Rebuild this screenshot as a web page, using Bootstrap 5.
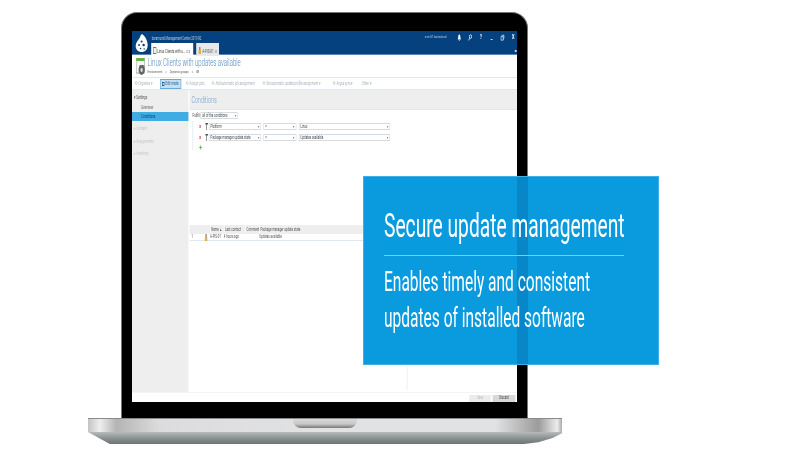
<!DOCTYPE html>
<html lang="en">
<head>
    <meta charset="UTF-8">
    <meta name="viewport" content="width=device-width, initial-scale=1">
    <title>Secure update management</title>
    <link rel="stylesheet" href="https://cdn.jsdelivr.net/npm/bootstrap@5.3.2/dist/css/bootstrap.min.css">
    <style>
        html, body { margin: 0; background: #fff; overflow: hidden; }
        .stage { position: relative; width: 800px; height: 470px; padding: 12px 0 0 88px; font-family: Roboto, sans-serif; }

        /* laptop */
        .bezel { width: 407px; height: 406px; margin-left: 33px; padding: 18px 10px 16px 10px; background: #000; border: 1px solid #777; border-bottom: 0; border-radius: 16px 16px 0 0; }
        .base-top { position: relative; width: 474px; height: 14px; background: linear-gradient(90deg, #c4c4c4 0, #eee 2.5%, #b4b4b4 6%, #dcdcde 15%, #e1e2e4 50%, #e1e2e4 86%, #9b9b9b 95%, #ececec 99%, #aaa 100%); border-top: 1px solid #8a8a8a; }
        .base-notch { position: absolute; left: 205px; top: 0; width: 64px; height: 9px; border-radius: 0 0 8px 8px; background: linear-gradient(180deg, #d8d8d8 0, #c8c8c8 55%, #777 100%); }
        .base-low { width: 474px; height: 12px; background: linear-gradient(180deg, #b6bbbb 0, #8b9291 50%, #6d7574 100%); clip-path: polygon(0 0, 100% 0, 100% 10%, 98% 50%, 95% 85%, 92% 100%, 4.6% 100%); }

        /* the app is laid out wide and squeezed, the whole screenshot is narrowed */
        .screen { width: 385px; height: 371px; overflow: hidden; background: #fff; }
        .app { width: 642px; height: 371px; transform: scaleX(.6); transform-origin: 0 0; filter: blur(.5px); font-size: 5px; line-height: 1; color: #444; white-space: nowrap; }

        .app-head { height: 24px; background: #05417f; color: #cfdcea; border-bottom: 1px solid #5a86b5; position: relative; }
        .app-logo { width: 22px; height: 20px; margin: 2px 5px 0 5px; }
        .head-title { padding: 6px 0 0 1px; height: 11px; font-size: 4.6px; color: #b9cbe0; }
        .tab-one { width: 70px; height: 13px; background: #fff; color: #444; padding: 4px 0 0 3px; margin-right: 5px; }
        .tab-two { width: 38px; height: 13px; background: #e6e8ea; color: #555; padding: 4px 0 0 3px; }
        .tab-ico { width: 6px; height: 7px; margin-right: 1px; vertical-align: -1.5px; }
        .head-right { margin-left: auto; height: 12px; padding: 3px 3px 0 0; gap: 11px; color: #fff; }
        .head-user { font-size: 4px; color: #b9cbe0; width: 43px; padding-top: 1px; }
        .head-ico { width: 7px; text-align: center; font-size: 6.5px; font-weight: 700; }
        .head-ico svg { width: 7px; height: 7px; display: block; }
        .head-more { position: absolute; right: 1px; bottom: 2px; width: 3px; height: 2px; background: #cfdcea; }

        .title-box { height: 23px; border-bottom: 1px solid #dfe8f0; }
        .title-ico { width: 18px; margin: 3px 2px 0 6px; height: 18px; }
        .title-main { font-size: 10px; font-weight: 300; color: #4e86b8; padding-top: 3px; height: 15px; }
        .crumbs { font-size: 4.4px; color: #555; }
        .crumbs span { margin-right: 5px; }

        .tools { height: 12px; border-bottom: 1px solid #dfe8f0; padding: 1px 0 0 5px; color: #a9b3ba; font-size: 4.8px; align-items: center; }
        .tool-item { flex: none; }
        .tool-on { background: #c3dff2; border: 1px solid #6aa7d3; color: #2b5f8a; height: 10px; line-height: 8px; padding-left: 2px; }
        .tool-dot { display: inline-block; width: 4px; height: 4px; border: 1px solid #c4ccd2; border-radius: 50%; margin-right: 2px; vertical-align: -.5px; }
        .tool-on .tool-dot { border-color: #2b5f8a; border-radius: 0; }

        .app-body { height: 302px; }
        .side { width: 94px; background: #eeeeee; flex: none; padding-top: 5px; }
        .side-head { height: 6px; padding-left: 3px; font-size: 5px; color: #555; margin-bottom: 2px; }
        .side-sub { height: 8px; padding: 2px 0 0 15px; color: #666; margin-bottom: 1px; }
        .side-on { background: #3fade3; color: #0d4468; margin-bottom: 5px; height: 9px; }
        .side-off { color: #c1c7cc; padding-left: 3px; height: 6px; margin-bottom: 6.500px; }
        .main-col { width: 548px; padding-left: 2px; }
        .cond-band { height: 20px; background: #eeeeee; color: #6f9ec4; font-size: 9px; font-weight: 300; padding: 6px 0 0 3px; border-bottom: 1px solid #dfe8f0; }
        .cond-area { height: 112px; padding: 2px 0 0 5px; }
        .fulfill-label { width: 13px; flex: none; }
        .fake-sel { height: 7px; background: #fff; border: 1px solid #d5dce1; padding: 0 2px; font-size: 4.8px; line-height: 5px; color: #444; flex: none; justify-content: space-between; }
        .fake-sel i { font-style: normal; font-size: 4px; color: #666; }
        .rules { border-left: 1px solid #d8dfe5; margin: 2px 0 0 0; padding: 1px 0 0 10px; height: 29px; }
        .rule-row { height: 8px; margin-bottom: 3px; align-items: center; }
        .rule-x { width: 7px; color: #d6313a; font-size: 6px; font-weight: 700; flex: none; }
        .rule-pin { width: 5px; height: 7px; margin: 0 1px 0 3px; flex: none; }
        .add-mark { color: #46ad3c; font-size: 8px; font-weight: 700; line-height: 8px; }

        .grid-area { margin-top: 3px; height: 165px; position: relative; }
        .grid-head { height: 9px; background: #eeeeee; align-items: center; color: #555; font-size: 4.8px; }
        .grid-row { height: 7px; align-items: center; border-bottom: 1px solid #dde8f2; color: #555; font-size: 4.8px; }
        .c-num { width: 24px; padding-left: 3px; flex: none; }
        .c-name { width: 23px; flex: none; }
        .c-last { width: 36px; flex: none; }
        .c-com { width: 23px; flex: none; }
        .c-ico { width: 10px; flex: none; }
        .head-cell { border-left: 1px solid #fff; height: 9px; line-height: 9px; padding-left: 1px; }
        .split-line { position: absolute; left: 362px; top: 16px; bottom: 0; width: 1px; background: #dde8f2; }

        .app-foot { height: 10px; justify-content: flex-end; padding: 2px 3px 0 0; gap: 3px; border-top: 1px solid #f2f5f7; }
        .foot-btn { width: 36px; height: 6.5px; text-align: center; font-size: 4.6px; line-height: 6.5px; background: #ececec; color: #bbb; }
        .foot-dark { background: #d8d8d8; color: #444; width: 38px; }

        /* blue callout lies over the laptop */
        .callout { position: absolute; left: 363px; top: 176px; width: 296px; height: 189px; background: #0a9ade; border: 1px solid #3fb0e6; color: #fff; overflow: hidden; }
        .callout-strip { position: absolute; left: 153px; top: 0; bottom: 0; width: 11px; background: #0787c8; }
        .callout-text { position: relative; padding: 29px 0 0 20px; }
        .squeeze { display: block; white-space: nowrap; transform-origin: 0 50%; font-weight: 400; }
        .call-title { font-size: 33px; line-height: 40px; transform: scaleX(.582); }
        .call-rule { width: 240px; height: 1px; background: #7ccbef; margin: 9px 0 8px; }
        .call-sub { font-size: 27px; line-height: 36px; transform: scaleX(.575); }
    </style>
</head>
<body>
    <div class="stage">
        <!-- Laptop -->
        <div class="bezel">
            <div class="screen">
                <div class="app">
                    <!-- Window header -->
                    <div class="app-head d-flex">
                        <svg class="app-logo" viewBox="0 0 13 20" preserveAspectRatio="none">
                            <path d="M7 1 C10 3 12.500 8 12.500 12 C12.500 16.500 10 19 6.500 19 C3 19 .5 16.500 .7 12.500 C.9 9 3.500 7 4.500 5 C5.200 3.600 5.500 2 7 1 Z" fill="#fff"/>
                            <circle cx="6.500" cy="8.500" r="1" fill="#05417f"/><circle cx="4" cy="12" r=".9" fill="#05417f"/><circle cx="8.500" cy="12" r="1.200" fill="#05417f"/><circle cx="5.500" cy="15.500" r=".8" fill="#05417f"/><circle cx="9" cy="16" r=".7" fill="#05417f"/>
                        </svg>
                        <div class="flex-grow-1 d-flex flex-column">
                            <div class="d-flex">
                                <div class="head-title">baramundi Management Center 2019 R2</div>
                                <div class="head-right d-flex">
                                    <div class="head-user">a-win\IT.baritoolocal</div>
                                    <div class="head-ico"><svg viewBox="0 0 8 8"><path d="M4 .5 C2.400 .5 2 2 2 3.500 C2 5 1 5.600 1 6.200 H7 C7 5.600 6 5 6 3.500 C6 2 5.600 .5 4 .5 Z M3.200 6.800 H4.800 V7.800 H3.200 Z" fill="#fff"/></svg></div>
                                    <div class="head-ico"><svg viewBox="0 0 8 8"><circle cx="4.800" cy="3" r="2.100" fill="none" stroke="#fff" stroke-width="1.100"/><path d="M3.300 4.600 L1.200 7.200" stroke="#fff" stroke-width="1.200"/></svg></div>
                                    <div class="head-ico">?</div>
                                    <div class="head-ico">_</div>
                                    <div class="head-ico"><svg viewBox="0 0 8 8"><path d="M2.500 1.500 H7 V5 M1 3 H5.500 V7 H1 Z" fill="none" stroke="#fff" stroke-width="1"/></svg></div>
                                    <div class="head-ico">X</div>
                                </div>
                            </div>
                            <div class="d-flex">
                                <div class="tab-one"><svg class="tab-ico" viewBox="0 0 6 7"><rect x=".5" y=".5" width="5" height="6" fill="#eef2ee" stroke="#6b8a5a"/></svg>Linux Clients with u... <span class="text-danger">x</span> <span class="text-primary">x</span></div>
                                <div class="tab-two"><svg class="tab-ico" viewBox="0 0 6 7"><rect x="1" y="3" width="4" height="4" fill="#e0b040"/><rect x="2" y="0" width="2" height="3" fill="#777"/></svg>A-PIS-01 &nbsp;x</div>
                            </div>
                        </div>
                        <div class="head-more"></div>
                    </div>

                    <!-- Page title -->
                    <div class="title-box d-flex">
                        <svg class="title-ico" viewBox="0 0 18 18">
                            <rect x="1" y="0" width="14" height="15" fill="#f4f6f4" stroke="#9aa"/>
                            <rect x="1" y="0" width="14" height="3" fill="#6cb24a"/>
                            <rect x="6" y="7" width="9" height="8" rx="2" fill="#777"/>
                            <circle cx="10" cy="12" r="5" fill="#666"/><circle cx="10" cy="12" r="2" fill="#ddd"/>
                        </svg>
                        <div>
                            <div class="title-main">Linux Clients with updates available</div>
                            <div class="crumbs"><span>Environment</span><span>&gt;</span><span>Dynamic groups</span><span>&gt;</span><span>IM</span></div>
                        </div>
                    </div>

                    <!-- Toolbar -->
                    <div class="tools d-flex">
                        <div class="tool-item" style="width:42px"><span class="tool-dot"></span>Organize ▾</div>
                        <div class="tool-item tool-on" style="width:35px;margin-right:8px"><span class="tool-dot"></span>Edit mode</div>
                        <div class="tool-item" style="width:43px"><span class="tool-dot"></span>Assign jobs</div>
                        <div class="tool-item" style="width:85px"><span class="tool-dot"></span>Add automatic job assignment</div>
                        <div class="tool-item" style="width:117px"><span class="tool-dot"></span>Set automatic update profile assignment ▾</div>
                        <div class="tool-item" style="width:48px"><span class="tool-dot"></span>Argus sync ▾</div>
                        <div class="tool-item">Other ▾</div>
                    </div>

                    <div class="app-body d-flex">
                        <!-- Sidebar -->
                        <div class="side">
                            <div class="side-head">▾ Settings</div>
                            <div class="side-sub">Overview</div>
                            <div class="side-sub side-on">Conditions</div>
                            <div class="side-off">▸ Content</div>
                            <div class="side-off">▸ Assignments</div>
                            <div class="side-off">▸ Inventory</div>
                        </div>

                        <div class="main-col">
                            <div class="cond-band">Conditions</div>
                            <!-- Conditions -->
                            <div class="cond-area">
                                <div class="d-flex align-items-center">
                                    <span class="fulfill-label">Fulfills</span>
                                    <div class="fake-sel d-flex" style="width:62px">all of the conditions <i>▾</i></div>
                                </div>
                                <div class="rules">
                                    <div class="rule-row d-flex">
                                        <span class="rule-x">x</span>
                                        <svg class="rule-pin" viewBox="0 0 5 7"><path d="M0 0 H5 V1.500 H3 V7 H2 V1.500 H0 Z" fill="#555"/></svg>
                                        <div class="fake-sel d-flex" style="width:87px">Platform <i>▾</i></div>
                                        <div class="fake-sel d-flex ms-1" style="width:55px">= <i>▾</i></div>
                                        <div class="fake-sel d-flex ms-1" style="width:152px">Linux <i>▾</i></div>
                                    </div>
                                    <div class="rule-row d-flex">
                                        <span class="rule-x">x</span>
                                        <svg class="rule-pin" viewBox="0 0 5 7"><path d="M0 0 H5 V1.500 H3 V7 H2 V1.500 H0 Z" fill="#555"/></svg>
                                        <div class="fake-sel d-flex" style="width:87px">Package manager update state <i>▾</i></div>
                                        <div class="fake-sel d-flex ms-1" style="width:55px">= <i>▾</i></div>
                                        <div class="fake-sel d-flex ms-1" style="width:152px">Updates available <i>▾</i></div>
                                    </div>
                                    <div class="add-mark">+</div>
                                </div>
                            </div>

                            <!-- Result grid -->
                            <div class="grid-area">
                                <div class="grid-head d-flex">
                                    <div class="c-num"></div>
                                    <div class="c-ico"></div>
                                    <div class="c-name head-cell">Name ▴</div>
                                    <div class="c-last head-cell">Last contact</div>
                                    <div class="c-com head-cell">Comment</div>
                                    <div class="head-cell">Package manager update state</div>
                                </div>
                                <div class="grid-row d-flex">
                                    <div class="c-num">1</div>
                                    <div class="c-ico"><svg width="7" height="7" viewBox="0 0 7 7"><rect x="1.500" y="3" width="4" height="4" fill="#e0b040"/><rect x="2.500" y="0" width="2" height="3" fill="#777"/></svg></div>
                                    <div class="c-name">A-PIS-01</div>
                                    <div class="c-last">4 hours ago</div>
                                    <div class="c-com"></div>
                                    <div>Updates available</div>
                                </div>
                                <div class="split-line"></div>
                            </div>
                        </div>
                    </div>

                    <!-- Footer buttons -->
                    <div class="app-foot d-flex">
                        <div class="foot-btn">Save</div>
                        <div class="foot-btn foot-dark">Discard</div>
                    </div>
                </div>
            </div>
        </div>
        <div class="base-top"><div class="base-notch"></div></div>
        <div class="base-low"></div>

        <!-- Callout -->
        <div class="callout">
            <div class="callout-strip"></div>
            <div class="callout-text">
                <span class="squeeze call-title">Secure update management</span>
                <div class="call-rule"></div>
                <span class="squeeze call-sub">Enables timely and consistent</span>
                <span class="squeeze call-sub">updates of installed software</span>
            </div>
        </div>
    </div>
    <script src="https://cdn.jsdelivr.net/npm/bootstrap@5.3.2/dist/js/bootstrap.bundle.min.js"></script>
</body>
</html>
